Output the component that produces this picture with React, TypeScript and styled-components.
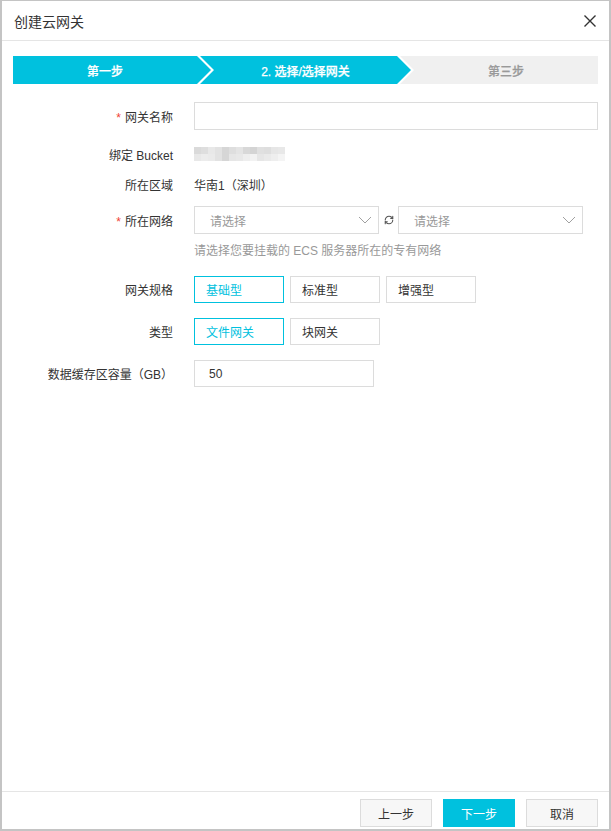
import React from 'react';
import styled, { createGlobalStyle } from 'styled-components';
import { RefreshCw } from 'lucide-react';

const GlobalStyle = createGlobalStyle`
  html, body {
    margin: 0;
    padding: 0;
    background: #fff;
  }
  * {
    box-sizing: border-box;
  }
  body {
    font-family: "Liberation Sans", "Noto Sans CJK SC", sans-serif;
    font-size: 12px;
    color: #333;
  }
`;

const CYAN = '#00c1de';

const Dialog = styled.div`
  width: 611px;
  height: 831px;
  display: flex;
  flex-direction: column;
  border: 2px solid #c4c4c4;
  border-top-width: 1px;
  background: #fff;
`;

const Header = styled.div`
  height: 40px;
  flex-shrink: 0;
  display: flex;
  align-items: center;
  justify-content: space-between;
  padding: 0 12px 0 12px;
  border-bottom: 1px solid #e5e5e5;
  h2 {
    margin: 0;
    font-size: 14px;
    font-weight: normal;
    color: #333;
  }
`;

const CloseButton = styled.button`
  border: 0;
  background: none;
  padding: 0;
  width: 14px;
  height: 14px;
  display: flex;
  cursor: pointer;
`;

const Body = styled.div`
  flex: 1;
  padding: 15px 11px 0 11px;
`;

const Steps = styled.div`
  display: flex;
  height: 28px;
`;

const Step = styled.div<{ $active: boolean; $pos: 'first' | 'mid' | 'last' }>`
  flex: ${(p) => (p.$pos === 'mid' ? '0 0 211px' : '1')};
  display: flex;
  align-items: center;
  justify-content: center;
  margin-left: ${(p) => (p.$pos === 'first' ? '0' : '-11px')};
  padding-left: ${(p) => (p.$pos === 'first' ? '0' : '14px')};
  padding-right: ${(p) => (p.$pos === 'last' ? '0' : '14px')};
  background: ${(p) => (p.$active ? CYAN : '#f0f0f0')};
  color: ${(p) => (p.$active ? '#fff' : '#999')};
  font-size: 12px;
  font-weight: 500;
  -webkit-text-stroke: 0.25px currentColor;
  clip-path: ${(p) =>
    p.$pos === 'first'
      ? 'polygon(0 0, calc(100% - 14px) 0, 100% 50%, calc(100% - 14px) 100%, 0 100%)'
      : p.$pos === 'mid'
      ? 'polygon(0 0, calc(100% - 14px) 0, 100% 50%, calc(100% - 14px) 100%, 0 100%, 14px 50%)'
      : 'polygon(0 0, 100% 0, 100% 100%, 0 100%, 14px 50%)'};
`;

const Form = styled.div`
  margin-top: 18px;
`;

const Row = styled.div<{ $mt: number; $h: number }>`
  display: grid;
  grid-template-columns: 160px 1fr;
  column-gap: 21px;
  align-items: center;
  margin-top: ${(p) => p.$mt}px;
  min-height: ${(p) => p.$h}px;
`;

const Label = styled.div`
  text-align: right;
  color: #333;
  font-size: 12px;
  white-space: nowrap;
  em {
    font-style: normal;
    color: #f04134;
    margin-right: 4px;
  }
`;

const TextInput = styled.div<{ $w?: number }>`
  width: ${(p) => (p.$w ? `${p.$w}px` : '100%')};
  height: ${(p) => (p.$w ? 27 : 28)}px;
  border: 1px solid #dcdcdc;
  padding: 0 14px;
  display: flex;
  align-items: center;
  font-size: 12px;
  color: #333;
`;

const Value = styled.div`
  font-size: 12px;
  color: #333;
`;

const Mosaic = styled.div`
  display: grid;
  grid-template-columns: repeat(13, 7px);
  grid-auto-rows: 7px;
`;

const NetRow = styled.div`
  display: flex;
  align-items: center;
`;

const Select = styled.div`
  width: 185px;
  height: 28px;
  border: 1px solid #dcdcdc;
  display: flex;
  align-items: center;
  justify-content: space-between;
  padding: 0 6px 0 15px;
  color: #999;
  font-size: 12px;
`;

const Refresh = styled.span`
  width: 19px;
  display: flex;
  justify-content: center;
  color: #555;
`;

const Hint = styled.div`
  margin: 8px 0 0 181px;
  line-height: 18px;
  color: #999;
  font-size: 12px;
`;

const Options = styled.div`
  display: flex;
  gap: 6px;
`;

const Option = styled.button<{ $selected?: boolean }>`
  width: 90px;
  height: 27px;
  padding: 0 0 0 11px;
  text-align: left;
  background: #fff;
  border: 1px solid ${(p) => (p.$selected ? CYAN : '#dcdcdc')};
  color: ${(p) => (p.$selected ? CYAN : '#333')};
  font-family: inherit;
  font-size: 12px;
`;

const Footer = styled.div`
  flex-shrink: 0;
  border-top: 1px solid #e5e5e5;
  padding: 7px 11px 2px;
  display: flex;
  justify-content: flex-end;
  gap: 11px;
`;

const FooterButton = styled.button<{ $primary?: boolean }>`
  width: 72px;
  height: 28px;
  border: 1px solid ${(p) => (p.$primary ? CYAN : '#dcdcdc')};
  background: ${(p) => (p.$primary ? CYAN : '#f7f7f7')};
  color: ${(p) => (p.$primary ? '#fff' : '#333')};
  font-family: inherit;
  font-size: 12px;
`;

const Chevron = () => (
  <svg width="14" height="8" viewBox="0 0 14 8" fill="none">
    <polyline points="1,1 7,7 13,1" stroke="#a0a0a0" strokeWidth="1" />
  </svg>
);

const top = [218, 222, 232, 226, 214, 222, 228, 216, 212, 224, 222, 230, 232];
const bottom = [232, 236, 234, 226, 214, 230, 232, 238, 242, 230, 234, 238, 244];

export default function App() {
  return (
    <>
      <GlobalStyle />
      <Dialog>
        <Header>
          <h2>创建云网关</h2>
          <CloseButton aria-label="关闭">
            <svg width="14" height="14" viewBox="0 0 14 14">
              <path d="M1.5 1.5 L12.5 12.5 M12.5 1.5 L1.5 12.5" stroke="#333" strokeWidth="1.4" />
            </svg>
          </CloseButton>
        </Header>
        <Body>
          <Steps>
            <Step $active $pos="first">第一步</Step>
            <Step $active $pos="mid">2. 选择/选择网关</Step>
            <Step $active={false} $pos="last">第三步</Step>
          </Steps>
          <Form>
            <Row $mt={0} $h={28}>
              <Label><em>*</em>网关名称</Label>
              <TextInput />
            </Row>
            <Row $mt={14} $h={20}>
              <Label>绑定 Bucket</Label>
              <Mosaic>
                {[...top, ...bottom].map((v, i) => (
                  <span key={i} style={{ background: `rgb(${v},${v},${v})` }} />
                ))}
              </Mosaic>
            </Row>
            <Row $mt={10} $h={20}>
              <Label>所在区域</Label>
              <Value>华南1（深圳）</Value>
            </Row>
            <Row $mt={12} $h={28}>
              <Label><em>*</em>所在网络</Label>
              <NetRow>
                <Select>
                  请选择
                  <Chevron />
                </Select>
                <Refresh>
                  <RefreshCw size={10} strokeWidth={2.6} />
                </Refresh>
                <Select>
                  请选择
                  <Chevron />
                </Select>
              </NetRow>
            </Row>
            <Hint>请选择您要挂载的 ECS 服务器所在的专有网络</Hint>
            <Row $mt={16} $h={27}>
              <Label>网关规格</Label>
              <Options>
                <Option $selected>基础型</Option>
                <Option>标准型</Option>
                <Option>增强型</Option>
              </Options>
            </Row>
            <Row $mt={15} $h={27}>
              <Label>类型</Label>
              <Options>
                <Option $selected>文件网关</Option>
                <Option>块网关</Option>
              </Options>
            </Row>
            <Row $mt={15} $h={27}>
              <Label>数据缓存区容量（GB）</Label>
              <TextInput $w={180}>50</TextInput>
            </Row>
          </Form>
        </Body>
        <Footer>
          <FooterButton>上一步</FooterButton>
          <FooterButton $primary>下一步</FooterButton>
          <FooterButton>取消</FooterButton>
        </Footer>
      </Dialog>
    </>
  );
}
